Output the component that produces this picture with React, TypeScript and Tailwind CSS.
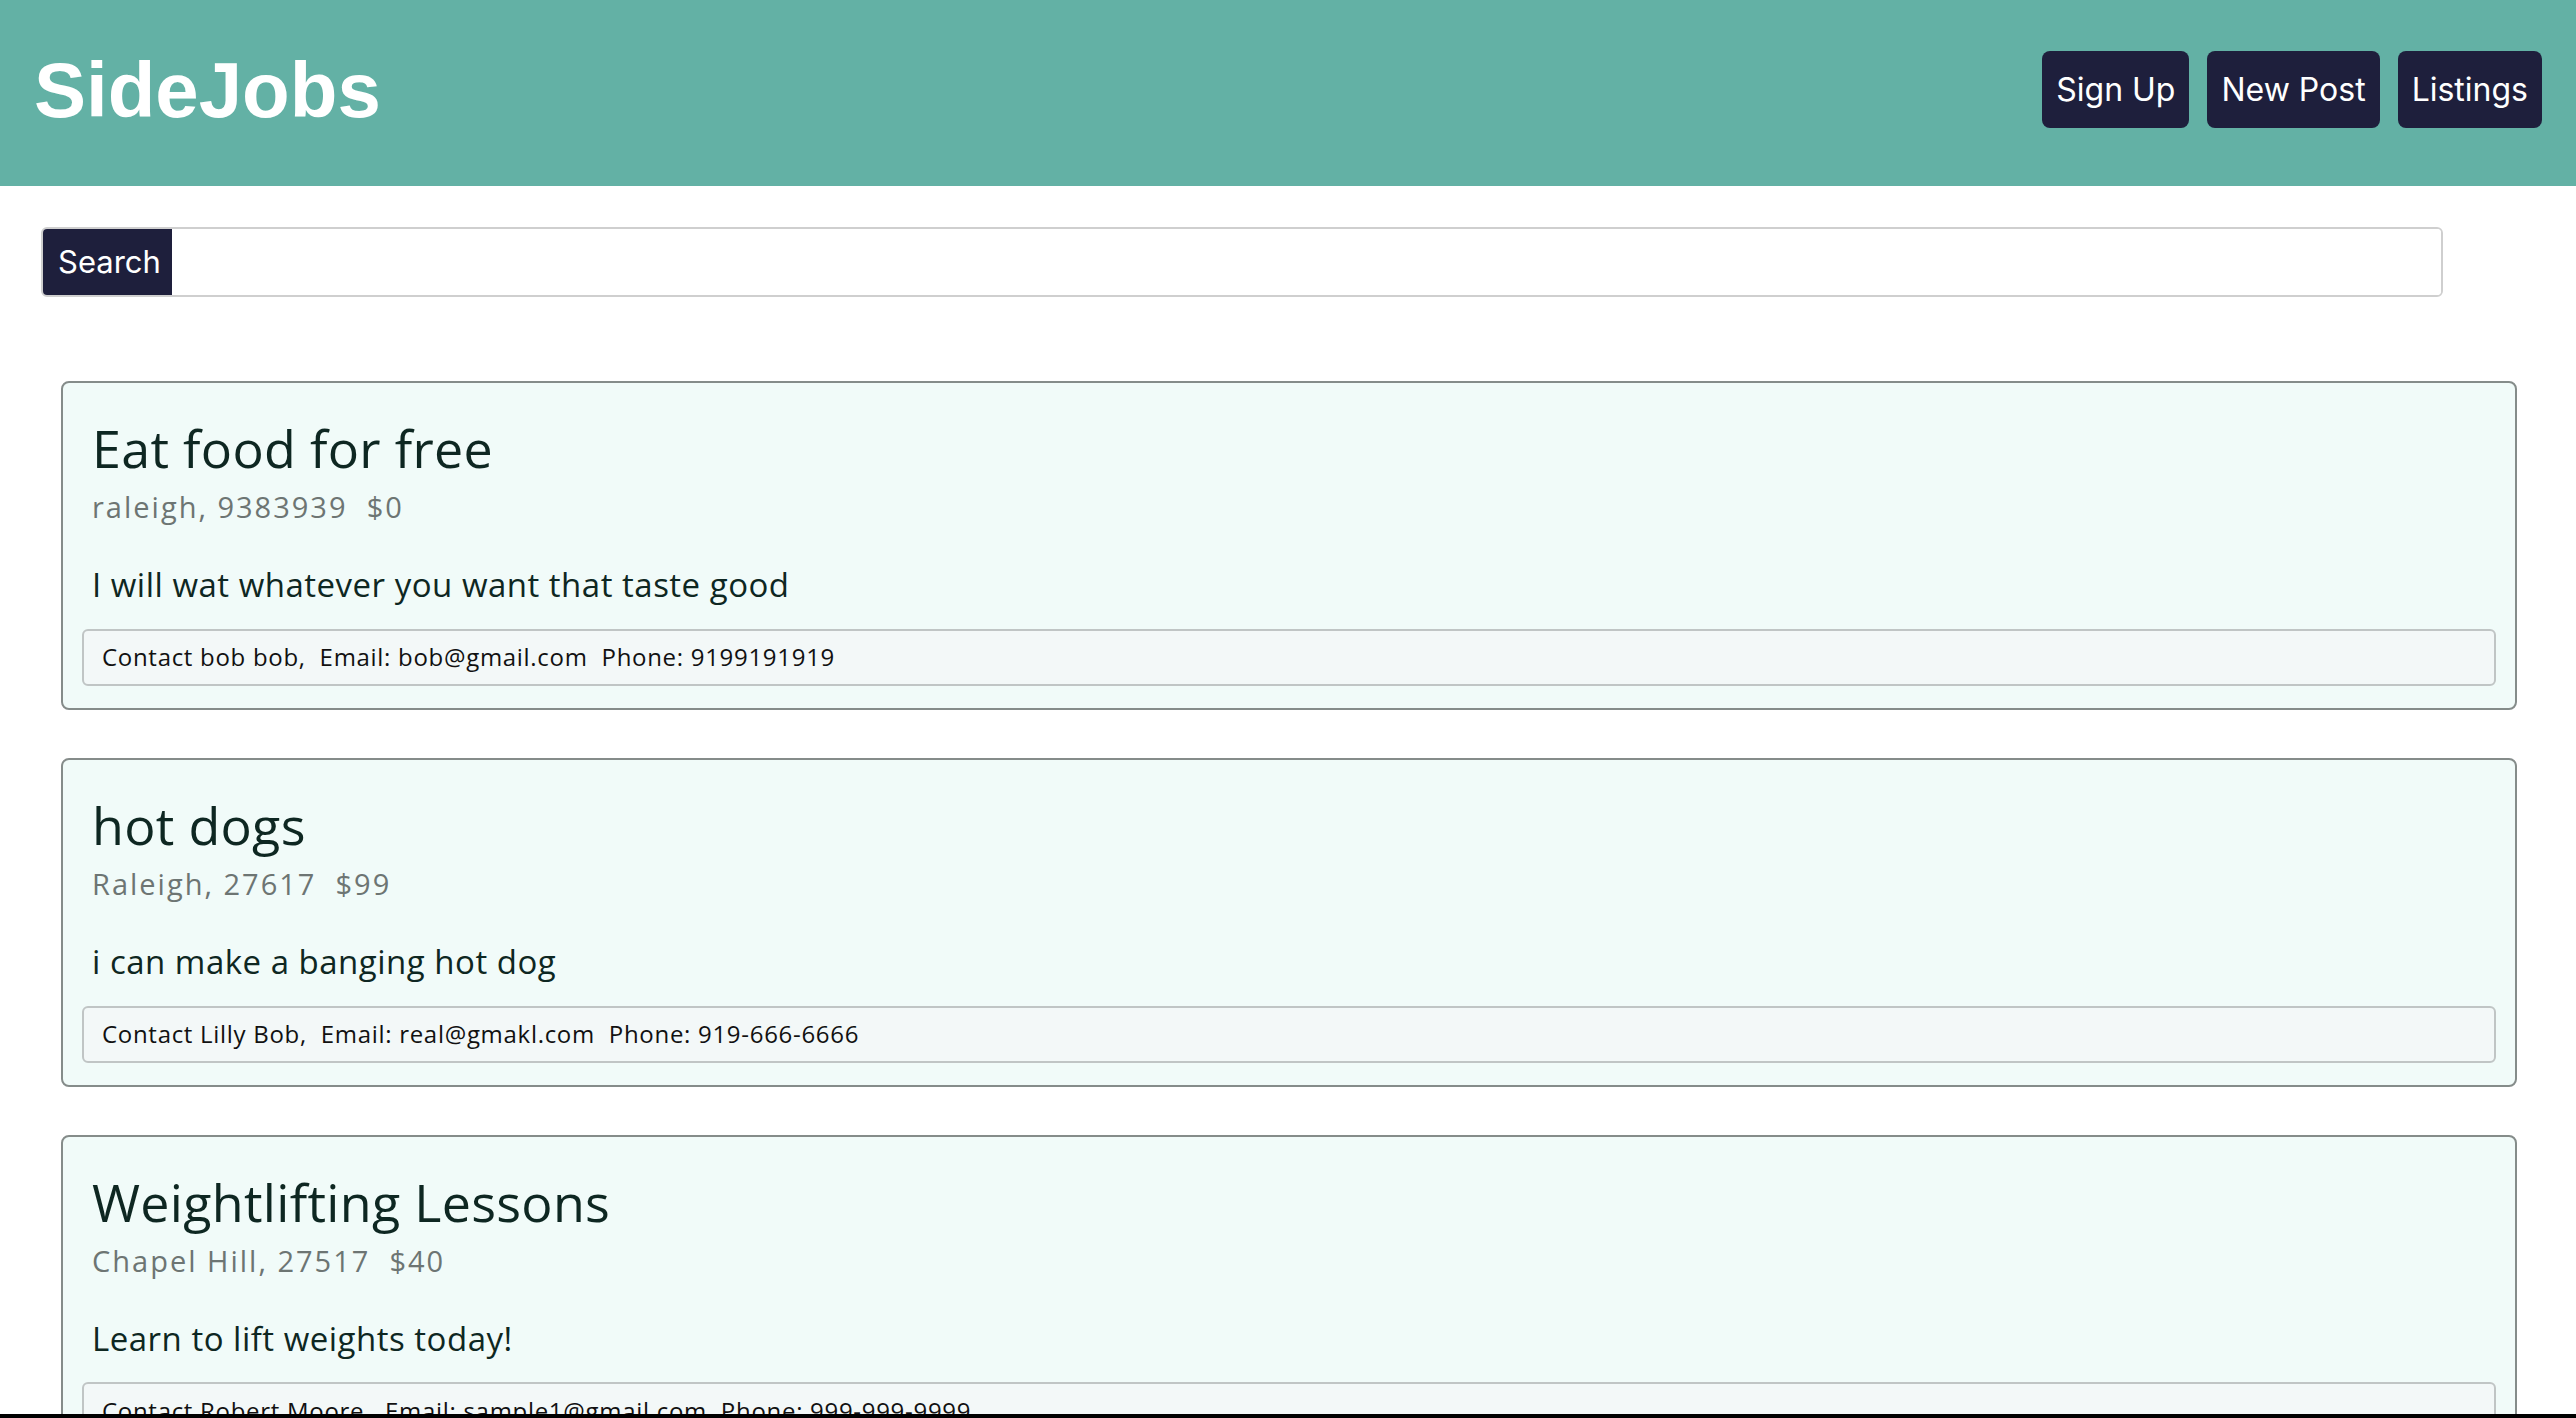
const listings = [
  {
    id: 1,
    title: 'Eat food for free',
    location: 'raleigh, 9383939',
    price: '$0',
    description: 'I will wat whatever you want that taste good',
    name: 'bob bob',
    email: 'bob@gmail.com',
    phone: '9199191919',
  },
  {
    id: 2,
    title: 'hot dogs',
    location: 'Raleigh, 27617',
    price: '$99',
    description: 'i can make a banging hot dog',
    name: 'Lilly Bob',
    email: 'real@gmakl.com',
    phone: '919-666-6666',
  },
  {
    id: 3,
    title: 'Weightlifting Lessons',
    location: 'Chapel Hill, 27517',
    price: '$40',
    description: 'Learn to lift weights today!',
    name: 'Robert Moore',
    email: 'sample1@gmail.com',
    phone: '999-999-9999',
  },
];

type Listing = (typeof listings)[number];

function NavButton({ label }: { label: string }) {
  return (
    <button className="h-[77px] px-[14px] rounded-[8px] bg-[#1e1f3c] text-white text-[32px] font-['Inter',sans-serif]">
      {label}
    </button>
  );
}

function ListingCard({ item }: { item: Listing }) {
  return (
    <div className="border-2 border-[#858c8a] rounded-[8px] bg-[#f1fbf9] pt-[34px] px-[19px] pb-[22px] font-['Open_Sans',sans-serif]">
      <h2 className="px-[10px] text-[52px] leading-[1.2] tracking-[0.3px] text-[#0e2722]">{item.title}</h2>
      <h6 className="px-[10px] mt-[11px] text-[29px] leading-[1.2] tracking-[2px] text-[#6d7573] whitespace-pre">
        {item.location}  {item.price}
      </h6>
      <p className="px-[10px] mt-[40px] text-[33px] leading-[1.2] tracking-[0.5px] text-[#0e2722]">{item.description}</p>
      <div className="mt-[24px] h-[57px] flex items-center pl-[18px] border-2 border-[#c0c5c5] rounded-[6px] bg-[#f3f8f8] text-[24px] tracking-[0.7px] text-[#111] whitespace-pre">
        Contact {item.name},  Email: {item.email}  Phone: {item.phone}
      </div>
    </div>
  );
}

export default function App() {
  return (
    <div className="h-screen flex flex-col overflow-hidden bg-white">
      <div className="flex-1 overflow-hidden">
        <header className="h-[186px] bg-[#63b1a5] flex items-start justify-between pl-[34px] pr-[34px]">
          <h1 className="mt-[51px] text-[78px] leading-none font-bold text-white font-['Liberation_Sans',Arial,sans-serif]">
            SideJobs
          </h1>
          <nav className="mt-[51px] flex gap-[18px]">
            <NavButton label="Sign Up" />
            <NavButton label="New Post" />
            <NavButton label="Listings" />
          </nav>
        </header>

        <div className="mt-[41px] ml-[41px] w-[2402px] h-[70px] flex border-2 border-[#cfcfcf] rounded-[6px] overflow-hidden font-['Inter',sans-serif]">
          <span className="w-[129px] bg-[#1e1f3c] text-white text-[31px] flex items-center pl-[15px]">Search</span>
          <input className="flex-1 outline-none bg-white" />
        </div>

        <div className="mt-[84px] pl-[61px] pr-[59px] flex flex-col gap-[48px]">
          {listings.map((item) => (
            <ListingCard key={item.id} item={item} />
          ))}
        </div>
      </div>
      <div className="h-[4px] bg-black" />
    </div>
  );
}
